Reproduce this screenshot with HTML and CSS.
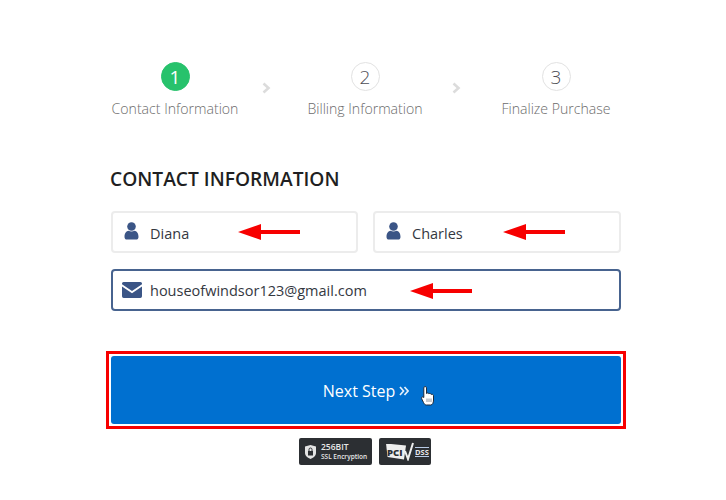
FILE: index.html
```html
<!DOCTYPE html>
<html lang="en">
<head>
  <meta charset="UTF-8">
  <title>Contact Information</title>
  <link rel="stylesheet" href="styles.css">
</head>
<body>

<div class="checkout">

  <div class="steps">
    <div class="step step-one">
      <span class="step-num active">1</span>
      <span class="step-label">Contact Information</span>
    </div>
    <svg class="chevron" width="9" height="12" viewBox="0 0 9 12"><path d="M1.500 1.500 6.500 6 1.500 10.500" fill="none" stroke="#dcdcdc" stroke-width="2.600"/></svg>
    <div class="step step-two">
      <span class="step-num">2</span>
      <span class="step-label">Billing Information</span>
    </div>
    <svg class="chevron" width="9" height="12" viewBox="0 0 9 12"><path d="M1.500 1.500 6.500 6 1.500 10.500" fill="none" stroke="#dcdcdc" stroke-width="2.600"/></svg>
    <div class="step step-three">
      <span class="step-num">3</span>
      <span class="step-label">Finalize Purchase</span>
    </div>
  </div>

  <h2 class="form-title">CONTACT INFORMATION</h2>

  <div class="name-row">
    <div class="field field-first">
      <svg class="user-icon" width="15" height="18" viewBox="0 0 15 18"><circle cx="7.500" cy="4.500" r="4.300" fill="#3b5586"/><path d="M0.500 15c0-4 2-6 4-6.200 1.800 1 4.200 1 6 0 2 .2 4 2.200 4 6.200 0 1.700-1 2.600-2.500 2.600H3c-1.500 0-2.500-.9-2.500-2.600z" fill="#3b5586"/></svg>
      <span class="field-text">Diana</span>
      <svg class="red-arrow first-arrow" width="62" height="16" viewBox="0 0 62 16"><path d="M0 8 23 0V6H62V10H23V16z" fill="#f70000"/></svg>
    </div>
    <div class="field">
      <svg class="user-icon" width="15" height="18" viewBox="0 0 15 18"><circle cx="7.500" cy="4.500" r="4.300" fill="#3b5586"/><path d="M0.500 15c0-4 2-6 4-6.200 1.800 1 4.200 1 6 0 2 .2 4 2.200 4 6.200 0 1.700-1 2.600-2.500 2.600H3c-1.500 0-2.500-.9-2.500-2.600z" fill="#3b5586"/></svg>
      <span class="field-text">Charles</span>
      <svg class="red-arrow second-arrow" width="62" height="16" viewBox="0 0 62 16"><path d="M0 8 23 0V6H62V10H23V16z" fill="#f70000"/></svg>
    </div>
  </div>

  <div class="field field-focus">
    <svg class="mail-icon" width="20" height="16" viewBox="0 0 20 16"><path d="M1.500 0h17A1.500 1.500 0 0 1 20 1.500v.7L10 9 0 2.200v-.7A1.500 1.500 0 0 1 1.500 0z" fill="#3b5586"/><path d="M0 4.400 10 11.200 20 4.400V14.300A1.700 1.700 0 0 1 18.300 16H1.700A1.700 1.700 0 0 1 0 14.300z" fill="#3b5586"/></svg>
    <span class="field-text">houseofwindsor123@gmail.com</span>
    <svg class="red-arrow third-arrow" width="62" height="16" viewBox="0 0 62 16"><path d="M0 8 23 0V6H62V10H23V16z" fill="#f70000"/></svg>
  </div>

  <div class="highlight">
    <button class="next-btn">
      <span>Next Step</span>
      <svg class="next-arrows" width="10" height="10" viewBox="0 0 10 10"><path d="M1 1 4.500 5 1 9M5.500 1 9 5 5.500 9" fill="none" stroke="#e4f0fb" stroke-width="1.700"/></svg>
    </button>
    <svg class="cursor" width="13" height="20" viewBox="0 0 13 20"><path d="M2.800 1.800c0-1.700 2.700-1.700 2.700 0V7.500c.8-.8 2-.6 2.400.3.800-.6 2-.3 2.300.6.900-.4 2.300.1 2.300 1.300V14c0 2.700-1 5-2.800 5H5.500c-1.500 0-2.200-1-3-2.500L.7 12.800c-.8-1.600 1-2.800 2.100-1.300z" fill="#fff" stroke="#1d2a3a" stroke-width="1"/><path d="M6 12.500v3.500M8 12.500v3.500M10 12.500v3.500" stroke="#5a6472" stroke-width=".7"/></svg>
  </div>

  <div class="badges">
    <div class="badge badge-ssl">
      <svg width="11" height="14" viewBox="0 0 11 14"><path d="M5.500 0 11 1.500V8c0 3-3 5-5.500 6C3 13 0 11 0 8V1.500z" fill="#e4e4e4"/><rect x="3" y="6" width="5" height="4.500" fill="#2c2f33"/><path d="M4 6V4.500a1.500 1.500 0 0 1 3 0V6" fill="none" stroke="#2c2f33"/></svg>
      <div class="ssl-text">
        <span class="ssl-bits">256BIT</span>
        <span class="ssl-small">SSL Encryption</span>
      </div>
    </div>
    <div class="badge badge-pci">
      <span class="pci-mark">PCI</span>
      <svg class="pci-tick" width="9" height="19" viewBox="0 0 9 19"><path d="M0 9 3 17 8 1" fill="none" stroke="#eee" stroke-width="2"/></svg>
      <span class="pci-dss">DSS</span>
    </div>
  </div>

</div>

</body>
</html>
```

FILE: styles.css
```css
* {
  box-sizing: border-box;
}

body {
  margin: 0;
  background: #fff;
  font-family: 'Open Sans', 'Noto Sans', sans-serif;
  color: #3a3f47;
}

.checkout {
  width: 520px;
  margin-left: 106px;
  padding-top: 62px;
}

/* steps */
.steps {
  display: flex;
  align-items: flex-start;
  height: 66px;
}

.step {
  display: flex;
  flex-direction: column;
  align-items: center;
  flex: none;
}

.step-one {
  width: 136px;
  margin-left: 1px;
}

.step-two {
  width: 132px;
  margin-left: 28px;
}

.step-three {
  width: 124px;
  margin-left: 33px;
}

.chevron {
  flex: none;
  margin-top: 20px;
  margin-left: 19px;
}

.step-two + .chevron {
  margin-left: 21px;
}

.step-num {
  width: 29px;
  height: 29px;
  border: 1px solid #e2e2e2;
  border-radius: 50%;
  display: flex;
  align-items: center;
  justify-content: center;
  font-size: 19px;
  font-weight: 300;
  color: #4d4d55;
}

.step-num.active {
  background: #27c26c;
  border-color: #27c26c;
  color: #fff;
  font-weight: 400;
}

.step-label {
  margin-top: 8px;
  font-size: 14.100px;
  font-weight: 300;
  line-height: 20px;
  color: #6c6c6c;
  white-space: nowrap;
}

/* form */
.form-title {
  margin: 38px 0 19px 4px;
  font-size: 19.200px;
  font-weight: 600;
  line-height: 26px;
  color: #1f1f22;
}

.name-row {
  display: flex;
  gap: 15px;
  margin: 0 5px 16px 5px;
}

.field {
  position: relative;
  flex: 1;
  height: 42px;
  display: flex;
  align-items: center;
  padding-left: 11px;
  background: #fff;
  border: 2px solid #ececec;
  border-radius: 4px;
}

.field-first {
  flex: 0 0 247px;
}

.field-focus {
  margin: 0 5px;
  padding-left: 9px;
  border-color: #47638f;
}

.user-icon {
  flex: none;
  margin-top: -3px;
}

.mail-icon {
  flex: none;
}

.field-text {
  margin-left: 11px;
  padding-top: 3px;
  font-size: 14.500px;
  line-height: 20px;
  color: #34383f;
}

.field-focus .field-text {
  margin-left: 8px;
  padding-top: 2px;
}

.red-arrow {
  position: absolute;
  top: 11px;
}

.first-arrow {
  left: 125px;
}

.second-arrow {
  left: 128px;
}

.third-arrow {
  top: 12px;
  left: 297px;
}

/* button */
.highlight {
  position: relative;
  margin-top: 40px;
  padding: 2px;
  border: 3px solid #f70000;
}

.next-btn {
  display: flex;
  align-items: center;
  justify-content: center;
  gap: 4px;
  width: 100%;
  height: 68px;
  padding: 2px 0 0 0;
  background: #0070d0;
  border: none;
  border-radius: 3px;
  color: #fff;
  font-family: inherit;
  font-size: 16px;
}

.cursor {
  position: absolute;
  left: 312px;
  top: 32px;
}

/* badges */
.badges {
  display: flex;
  justify-content: center;
  gap: 7px;
  margin-top: 9px;
  padding-right: 2px;
}

.badge {
  height: 27px;
  display: flex;
  align-items: center;
  background: #2c2f33;
  border-radius: 2px;
  color: #e8e8e8;
}

.badge-ssl {
  width: 73px;
  padding-left: 6px;
  gap: 5px;
}

.ssl-text {
  display: flex;
  flex-direction: column;
}

.ssl-bits {
  font-size: 8.500px;
  font-weight: 600;
  line-height: 11px;
}

.ssl-small {
  font-size: 6.500px;
  font-weight: 600;
  line-height: 10px;
  white-space: nowrap;
}

.badge-pci {
  width: 52px;
  padding-left: 7px;
}

.pci-mark {
  width: 20px;
  padding: 3px 0 2px 1px;
  background: #eee;
  clip-path: polygon(0 0, 100% 12%, 90% 100%, 8% 85%);
  color: #2c2f33;
  font-size: 9.500px;
  font-weight: 800;
  line-height: 11px;
}

.pci-tick {
  margin-left: -1px;
}

.pci-dss {
  margin-left: 1px;
  font-size: 7.500px;
  font-weight: 700;
  line-height: 8px;
  border-top: 1px solid #b9cbe6;
  border-bottom: 1px solid #b9cbe6;
}
```
